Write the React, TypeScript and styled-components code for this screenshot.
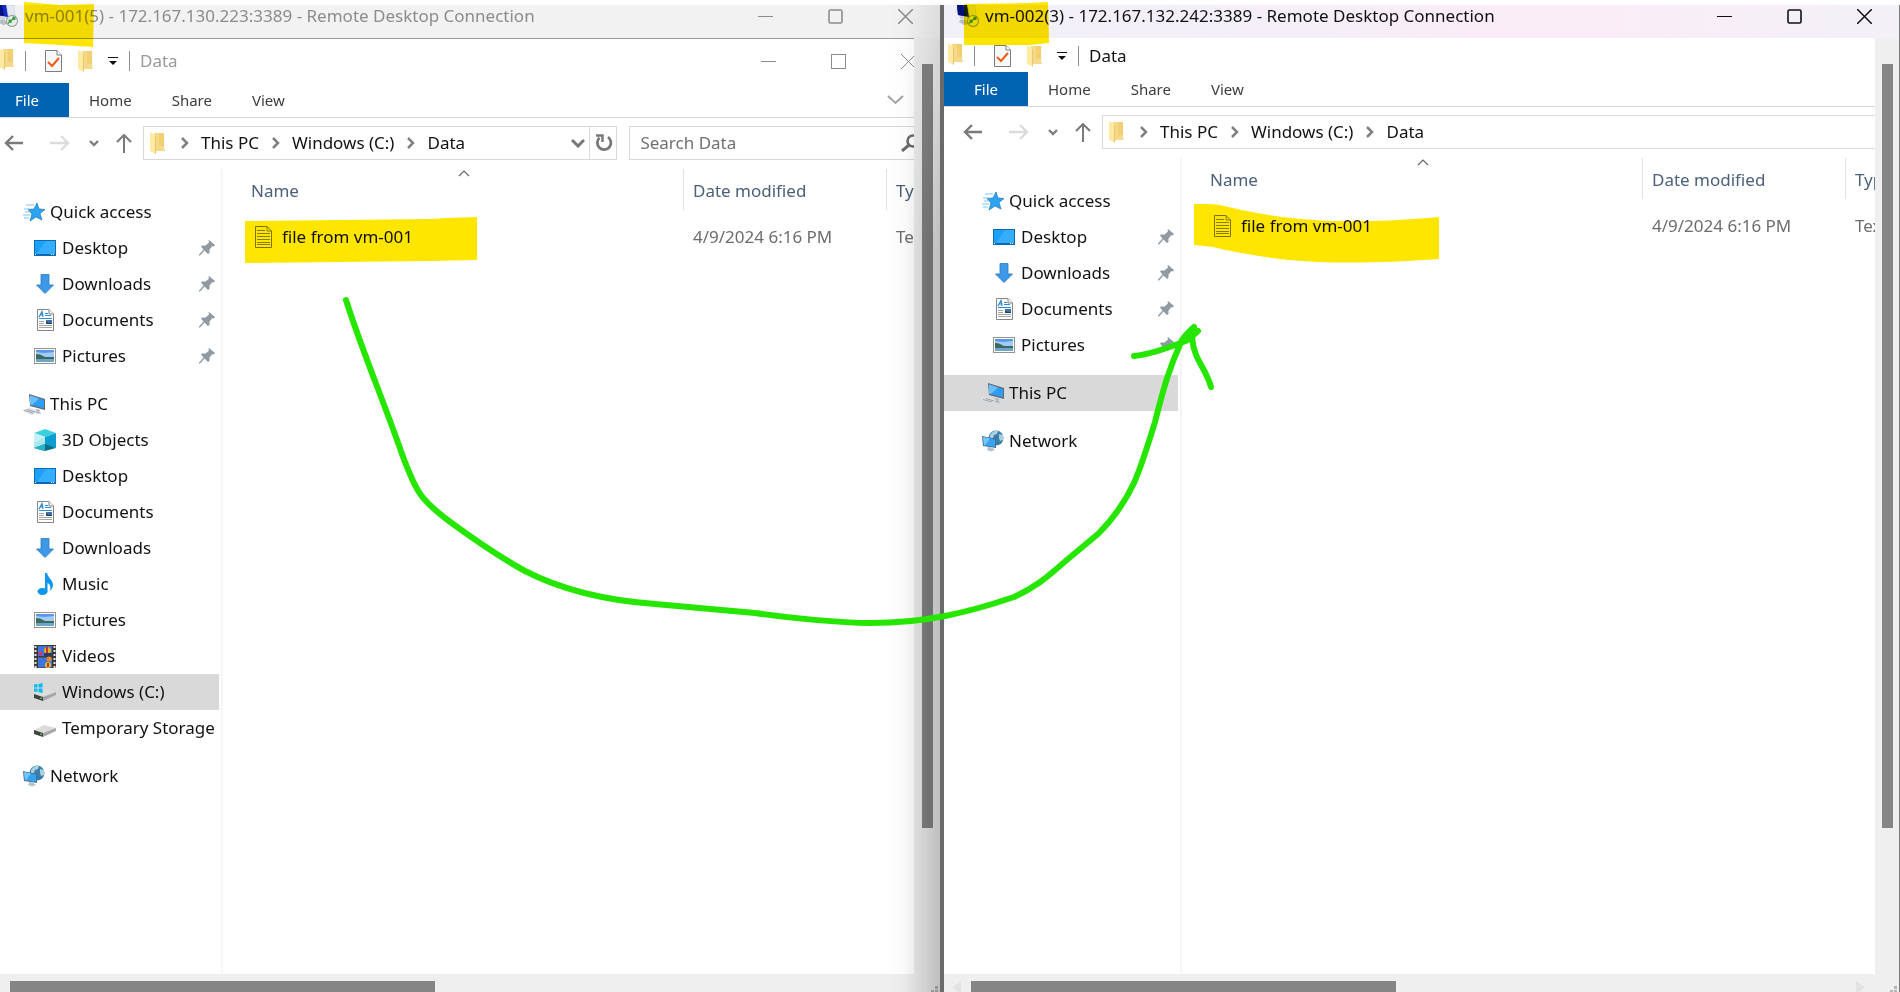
import React, { ReactNode } from 'react';
import styled, { createGlobalStyle, css } from 'styled-components';

const GlobalStyle = createGlobalStyle`
  * { box-sizing: border-box; }
  html, body { margin: 0; background: #fff; }
  body { font-family: "Noto Sans", "Open Sans", sans-serif; font-size: 17px; line-height: 24px; color: #111; overflow: hidden; }
  button { font: inherit; border: 0; background: none; padding: 0; margin: 0; color: inherit; }
  a { color: inherit; text-decoration: none; }
  svg { display: block; flex: none; }
`;

/* ---------- icons ---------- */

const RemoteIcon = () => (
  <svg width="22" height="22" viewBox="0 0 22 22">
    <path d="M1 0L18 0 20 13 3 14Z" fill="#cdd2da" />
    <path d="M0 0L10 0 12 12 1 10Z" fill="#1029c8" />
    <path d="M0 0L6 0 8 11 1 10Z" fill="#06107a" />
    <path d="M3 15L8 14 12 19 7 20 2 17Z" fill="#b9bdc4" />
    <path d="M11 0L18 1 19 12 13 12Z" fill="#e3e7ee" />
    <circle cx="16" cy="16" r="6" fill="#8f9a94" />
    <circle cx="16" cy="16" r="5" fill="#e6efe6" />
    <path d="M12.500 15.500l3-.5-1 3M19.500 14l-3 .5 1-3M14.500 15.500l-2.500 3M17.500 14l2-2" stroke="#3f9a4a" strokeWidth="1.300" fill="none" />
  </svg>
);

const FolderIcon = () => (
  <svg width="15" height="22" viewBox="0 0 15 22">
    <path d="M4 1H14V17l1 1v1H5Z" fill="#f5d98a" />
    <path d="M9 1H14V14H9Z" fill="#f3cf72" />
    <path d="M0 0L6 4V22L0 19Z" fill="#ffe9a3" />
    <path d="M5 4l1 0V22l-1-1Z" fill="#e9c668" />
  </svg>
);

const PropertiesIcon = () => (
  <svg width="17" height="22" viewBox="0 0 17 22">
    <path d="M.5.5H12L16.500 5V21.500H.5Z" fill="#f7f8fa" stroke="#7c7c7c" />
    <path d="M12 .5V5H16.500" fill="#fff" stroke="#7c7c7c" />
    <path d="M3 12l4 4 7-8" fill="none" stroke="#ea5b17" strokeWidth="2" />
  </svg>
);

const CustomizeIcon = () => (
  <svg width="10" height="9" viewBox="0 0 10 9">
    <path d="M0 0H10V1H0ZM1 4H9L5 8Z" fill="#111" />
  </svg>
);

const BackIcon = ({ color }: { color: string }) => (
  <svg width="20" height="16" viewBox="0 0 20 16">
    <path d="M9 1L2 8l7 7M2 8H19" fill="none" stroke={color} strokeWidth="2.400" />
  </svg>
);
const ForwardIcon = ({ color }: { color: string }) => (
  <svg width="20" height="16" viewBox="0 0 20 16">
    <path d="M11 1l7 7-7 7M18 8H0" fill="none" stroke={color} strokeWidth="2.400" />
  </svg>
);
const UpIcon = () => (
  <svg width="16" height="19" viewBox="0 0 16 19">
    <path d="M1 8l7-7 7 7M8 1V19" fill="none" stroke="#7a7a7a" strokeWidth="2" />
  </svg>
);
const SmallDown = () => (
  <svg width="10" height="7" viewBox="0 0 10 7">
    <path d="M1 1l4 4 4-4" fill="none" stroke="#7d7d7d" strokeWidth="2.400" />
  </svg>
);
const DownIcon = () => (
  <svg width="14" height="10" viewBox="0 0 14 10">
    <path d="M1 2l6 6 6-6" fill="none" stroke="#777" strokeWidth="3" />
  </svg>
);
const CrumbIcon = () => (
  <svg width="8" height="12" viewBox="0 0 8 12">
    <path d="M1 1l5 5-5 5" fill="none" stroke="#808080" strokeWidth="2.500" />
  </svg>
);
const RefreshIcon = () => (
  <svg width="18" height="18" viewBox="0 0 18 18">
    <path d="M13 3.200A6.800 6.800 0 1 1 4.500 3.800" fill="none" stroke="#777" strokeWidth="2.800" />
    <path d="M1 1.500H7.500V8" fill="none" stroke="#777" strokeWidth="2.400" />
  </svg>
);
const SearchIcon = () => (
  <svg width="20" height="18" viewBox="0 0 20 18">
    <circle cx="12" cy="7" r="5.500" fill="none" stroke="#6c6c6c" strokeWidth="2.600" />
    <path d="M8 11L1 17" stroke="#6c6c6c" strokeWidth="3" />
  </svg>
);
const RibbonDown = () => (
  <svg width="17" height="10" viewBox="0 0 17 10">
    <path d="M1 1l7.500 7L16 1" fill="none" stroke="#a3a3a3" strokeWidth="2" />
  </svg>
);
const SortIcon = () => (
  <svg width="12" height="7" viewBox="0 0 12 7">
    <path d="M1 6l5-5 5 5" fill="none" stroke="#666" strokeWidth="1.200" />
  </svg>
);

const MinimizeGlyph = () => (
  <svg width="15" height="15" viewBox="0 0 15 15"><path d="M0 7.500H15" stroke="currentColor" /></svg>
);
const MaximizeGlyph = ({ round }: { round?: boolean }) => (
  <svg width="15" height="15" viewBox="0 0 15 15">
    <rect x={round ? 1 : 0.5} y={round ? 1 : 0.5} width={round ? 13 : 14} height={round ? 13 : 14} rx={round ? 1.5 : 0}
      fill="none" stroke="currentColor" strokeWidth={round ? 1.6 : 1} />
  </svg>
);
const CloseGlyph = ({ bold }: { bold?: boolean }) => (
  <svg width="15" height="15" viewBox="0 0 15 15">
    <path d="M0 0L15 15M15 0L0 15" stroke="currentColor" strokeWidth={bold ? 1.5 : 1} />
  </svg>
);

const StarIcon = () => (
  <svg width="22" height="20" viewBox="0 0 22 20">
    <path d="M14 1l2 6 6 .5-5 4 2 6.500-6-3-6 4 2-7-4-4.500 6-.5Z" fill="#2ea3f2" stroke="#1478be" strokeWidth=".7" />
    <path d="M3 3H11M1 7H7M2 10H6M0 13H7M1 16H6" stroke="#7cc3f2" strokeWidth="1" />
  </svg>
);
const DesktopIcon = () => (
  <svg width="22" height="16" viewBox="0 0 22 16">
    <rect x=".5" y=".5" width="21" height="15" fill="#1ba1fb" stroke="#0b6cb4" />
    <path d="M12 1H21V14H3Z" fill="#37aefc" />
    <path d="M1 14H21V15H1Z" fill="#0a66b0" />
    <path d="M1 14h1v1H1ZM17 14h1v1h-1ZM19 14h1v1h-1Z" fill="#fff" />
  </svg>
);
const DownloadIcon = () => (
  <svg width="20" height="20" viewBox="0 0 20 20">
    <path d="M6 .5H14V11H18.500L10 19.500 1.500 11H6Z" fill="#3d98e8" stroke="#2b78c2" strokeWidth=".8" />
  </svg>
);
const DocumentIcon = () => (
  <svg width="17" height="22" viewBox="0 0 17 22">
    <path d="M.5.5H12L16.500 5V21.500H.5Z" fill="#fff" stroke="#858585" />
    <path d="M12 .5V5H16.500" fill="#f3f3f3" stroke="#858585" />
    <path d="M2 8L5 2.500 6 8M3 6H6" stroke="#1c86d8" fill="none" strokeWidth="1.200" />
    <path d="M8 4.500H11M8 6.500H14M2 9.500H15" stroke="#2b8ddb" />
    <path d="M2 12.500H7M2 14.500H7M2 16.500H15M2 18.500H15" stroke="#a5a5a5" />
    <path d="M9 11H15V15H9Z" fill="#3f6fae" /><path d="M9 13l3 1 3 0V15H9Z" fill="#23444a" />
  </svg>
);
const PictureIcon = () => (
  <svg width="22" height="16" viewBox="0 0 22 16">
    <rect x=".5" y=".5" width="21" height="15" fill="#fff" stroke="#949494" />
    <path d="M2 2H20V14H2Z" fill="#9fcbf5" />
    <path d="M2 2H20V4L10 5 2 4Z" fill="#5b97e8" />
    <path d="M2 6l4 .5 5 2.500 9 0V11H2Z" fill="#3b6a5c" />
    <path d="M2 11H20V14H2Z" fill="#6fa5c9" />
  </svg>
);
const PcIcon = () => (
  <svg width="23" height="21" viewBox="0 0 23 21">
    <path d="M7 0L23 5V16L8 12Z" fill="#5a6a78" />
    <path d="M8 1.500L22 6V14.500L8 10.500Z" fill="#2f9df4" />
    <path d="M8 1.500L17 4.400 10 11 8 10.500Z" fill="#6cc0fa" />
    <path d="M14 15l4 1-1 2 3 2-7-1Z" fill="#aab2b9" />
    <path d="M0 16l8-2 8 3-6 4Z" fill="#d9dee2" />
    <path d="M2 16.500l9 2.500M5 15.500l8 2.500" stroke="#8d979f" strokeWidth=".8" />
  </svg>
);
const ObjectsIcon = () => (
  <svg width="22" height="22" viewBox="0 0 22 22">
    <path d="M0 4L11 0 22 4 11 8Z" fill="#3bd0de" />
    <path d="M0 4L11 8V16L0 19Z" fill="#a9e8ef" /><path d="M0 4L11 8 0 14Z" fill="#c6f1f4" />
    <path d="M22 4L11 8V16L22 19Z" fill="#0c9ed2" />
    <path d="M11 15L22 19 11 22 0 19Z" fill="#0a6f86" /><path d="M11 15V22L0 19Z" fill="#29b3c6" />
  </svg>
);
const MusicIcon = () => (
  <svg width="17" height="22" viewBox="0 0 17 22">
    <ellipse cx="5.500" cy="18.500" rx="5" ry="3.500" fill="#0d97ee" />
    <path d="M8 0H10C11 5 16 7 16 12 16 15 14 17 13 18 14 14 13 11 10.500 10V18.500H8Z" fill="#0d97ee" />
  </svg>
);
const VideoIcon = () => (
  <svg width="22" height="23" viewBox="0 0 22 23">
    <path d="M0 0H22V23H0Z" fill="#3a3a3a" />
    <path d="M1.500 1V23M20.500 1V23" stroke="#e8e8e8" strokeWidth="2" strokeDasharray="2 2" />
    <path d="M4 1H18V11H4ZM4 12.500H18V22.500H4Z" fill="#3f74dd" />
    <circle cx="13.500" cy="5.500" r="3.500" fill="#e4b21c" /><path d="M12 2h2v7h-2Z" fill="#c83028" />
    <circle cx="6.500" cy="8.500" r="2" fill="#d6336c" /><path d="M10 8H18V11H10Z" fill="#2b3a66" />
    <circle cx="15" cy="14" r="2.500" fill="#e98a1c" /><circle cx="14" cy="20" r="3" fill="#e8c21c" />
    <path d="M13 18h2v4h-2Z" fill="#c83028" />
  </svg>
);
const DriveIcon = ({ windows }: { windows?: boolean }) => (
  <svg width="22" height="18" viewBox="0 0 22 18">
    <path d="M0 11L10 6 22 9 9 14Z" fill="#dcdcdc" />
    <path d="M0 11L9 14V18L0 15Z" fill="#3e4240" />
    <path d="M9 14L22 9V12L9 18Z" fill="#a7a7a7" />
    <path d="M6 14.500h2v1.500H6Z" fill="#3fbf4f" />
    {windows && <path d="M0 1.500L3.500 1V4.500H0ZM4.500 1L8.500 0V4.500H4.500ZM0 5.500H3.500V9L0 8.500ZM4.500 5.500H8.500V10L4.500 9.200Z" fill="#0bbcf2" />}
  </svg>
);
const NetworkIcon = () => (
  <svg width="22" height="22" viewBox="0 0 22 22">
    <circle cx="14" cy="8" r="7.500" fill="#3a7fa8" />
    <path d="M8 5C10 1 14 0 16 1L15 4 12 5 11 8 8 9ZM17 4l4 1 0 5-3 1-1-3Z" fill="#a9cfe2" />
    <path d="M0 6L14 9V18L1 16Z" fill="#4a6f8c" />
    <path d="M1 7L13 9.700V17L2 15.200Z" fill="#35a3f3" /><path d="M1 7L8 8.600 3 15.300 2 15.200Z" fill="#73c6fb" />
    <path d="M6 17l4 .5 3 2.500-4 1.500-4-1.500Z" fill="#b9c3cb" />
  </svg>
);
const TextFileIcon = () => (
  <svg width="17" height="22" viewBox="0 0 17 22">
    <path d="M.5.5H12L16.500 5V21.500H.5Z" fill="#fff" stroke="#7d7d7d" />
    <path d="M12 .5V5H16.500M2 4.500H10M2 7.500H15M2 10.500H15M2 13.500H15M2 16.500H15M2 18.500H15" fill="none" stroke="#8a8a8a" />
  </svg>
);
const PinIcon = () => (
  <svg width="16" height="16" viewBox="0 0 16 16">
    <path d="M10 0L16 5 15 6.500 13.500 6 10.500 9.500 10.500 13 9 14 5.500 10.500 1 15.500 0 15.500 0 14.500 4.500 9.500 2 6.500 3 5.500 6.500 5.500 10 2.500 9.500 1Z" fill="#8f9aa3" />
  </svg>
);

/* ---------- window frame ---------- */

const Screen = styled.main`
  position: relative;
  display: grid;
  grid-template-columns: minmax(0, 944fr) minmax(0, 956fr);
  height: 100vh;
  padding-top: 5px;
  overflow: hidden;
`;

const Frame = styled.section<{ $active?: boolean }>`
  position: relative;
  min-width: 0;
  min-height: 0;
  display: flex;
  flex-direction: column;
  background: #fff;
  border-right: ${p => (p.$active ? '1px solid #7d7d7d' : '4px solid #6a6a6a')};
`;

const TitleBar = styled.header<{ $active?: boolean }>`
  display: flex;
  align-items: flex-start;
  flex: none;
  height: 33px;
  overflow: hidden;
  ${p => p.$active
    ? css`background: linear-gradient(90deg, #f1f0f8 0%, #f5eff8 40%, #faedf7 55%, #faedf7 70%, #f4f0f7 95%); color: #111;`
    : css`background: #f2f2f2; color: #8c8c8c;`}
`;

const AppMark = styled.span<{ $active?: boolean }>`
  flex: none;
  width: ${p => (p.$active ? 41 : 25)}px;
  padding-left: ${p => (p.$active ? 13 : 0)}px;
  display: flex;
  justify-content: flex-start;
  overflow: hidden;
  svg { margin-left: ${p => (p.$active ? 0 : -4)}px; }
`;

const WindowTitle = styled.h1`
  margin: 0;
  font-size: 17px;
  font-weight: 400;
  line-height: 22px;
  white-space: nowrap;
`;

const Controls = styled.div<{ $clipped?: boolean; $color: string }>`
  display: flex;
  margin-left: auto;
  margin-right: ${p => (p.$clipped ? -29 : 0)}px;
  color: ${p => p.$color};
`;
const ControlButton = styled.button`
  width: 70px;
  height: 22px;
  display: flex;
  align-items: center;
  justify-content: center;
`;

const Body = styled.div`
  flex: 1;
  min-height: 0;
  display: flex;
`;
const Viewport = styled.div<{ $topLine?: boolean }>`
  flex: 1;
  min-width: 0;
  overflow: hidden;
  display: flex;
  flex-direction: column;
  ${p => p.$topLine && css`border-top: 1px solid #9b9b9b;`}
`;
const VerticalTrack = styled.div<{ $active?: boolean }>`
  flex: none;
  width: ${p => (p.$active ? 24 : 26)}px;
  padding: 26px 0 0 ${p => (p.$active ? 7 : 8)}px;
  background: #efefef;
`;
const VerticalThumb = styled.div`
  width: 11px;
  height: 84%;
  background: #858585;
`;
const HorizontalTrack = styled.div<{ $active?: boolean }>`
  flex: none;
  height: 18px;
  display: flex;
  align-items: flex-end;
  padding: 0 2px 0 ${p => (p.$active ? 9 : 10)}px;
  background: #efefef;
`;
const HorizontalThumb = styled.div<{ $active?: boolean }>`
  flex: none;
  width: 425px;
  height: 11px;
  margin-left: ${p => (p.$active ? 9 : 0)}px;
  background: #858585;
`;
const TrackArrow = styled.svg<{ $end?: boolean }>`
  ${p => p.$end && css`margin-left: auto; margin-right: 25px;`}
`;
const Grip = styled.svg<{ $pushed?: boolean }>`
  ${p => p.$pushed && css`margin-left: auto;`}
`;
const EdgeShadow = styled.div`
  position: absolute;
  top: 0;
  right: 0;
  bottom: 0;
  width: 55px;
  pointer-events: none;
  background: linear-gradient(90deg, rgba(0,0,0,0) 0%, rgba(0,0,0,.02) 35%, rgba(0,0,0,.07) 53%, rgba(0,0,0,.2) 100%);
  mask-image: linear-gradient(180deg, rgba(0,0,0,.4), #000 25%);
`;

/* ---------- explorer chrome ---------- */

const QuickBar = styled.div<{ $active?: boolean }>`
  display: flex;
  align-items: center;
  flex: none;
  height: ${p => (p.$active ? 34 : 44)}px;
  padding-top: ${p => (p.$active ? 2 : 0)}px;
  padding-left: ${p => (p.$active ? 4 : 0)}px;
  overflow: hidden;
`;
const QuickFolder = styled.span<{ $cut?: boolean }>`
  display: block;
  flex: none;
  width: ${p => (p.$cut ? 14 : 15)}px;
  overflow: hidden;
  margin-bottom: 4px;
  svg { margin-left: ${p => (p.$cut ? -1 : 0)}px; }
`;
const Divider = styled.span`
  width: 1px;
  height: 20px;
  margin: 0 0 0 11px;
  background: #8d8d8d;
`;
const QuickButton = styled.button<{ $gap: number }>`
  margin-left: ${p => p.$gap}px;
`;
const FolderTitle = styled.h2<{ $active?: boolean }>`
  margin: 0 0 0 10px;
  font-size: 17px;
  font-weight: 400;
  line-height: 24px;
  color: ${p => (p.$active ? '#111' : '#999')};
`;

const Ribbon = styled.nav`
  display: flex;
  flex: none;
  height: 35px;
  border-bottom: 1px solid #d9d9d9;
`;
const FileTab = styled.button<{ $active?: boolean }>`
  width: ${p => (p.$active ? 84 : 69)}px;
  padding-left: ${p => (p.$active ? 30 : 15)}px;
  text-align: left;
  font-size: 15px;
  color: #fff;
  background: #0063b1;
`;
const Tab = styled.button`
  padding: 0 20px;
  font-size: 15px;
  color: #3c3c3c;
`;
const RibbonToggle = styled.button`
  margin-left: auto;
  padding-right: 10px;
`;

const NavRow = styled.div<{ $active?: boolean }>`
  display: flex;
  align-items: center;
  flex: none;
  padding: 8px 0 9px ${p => (p.$active ? 19 : 4)}px;
`;
const NavButton = styled.button<{ $gap?: number }>`
  flex: none;
  margin-left: ${p => p.$gap ?? 0}px;
`;
const AddressBar = styled.div<{ $open?: boolean }>`
  display: flex;
  align-items: center;
  height: 34px;
  margin-left: 11px;
  padding-left: 6px;
  border: 1px solid #d9d9d9;
  ${p => p.$open ? css`flex: 1; border-right: 0;` : css`flex: 472 1 0;`}
`;
const Crumb = styled.a`
  margin: 0 13px 0 12px;
  white-space: nowrap;
`;
const CrumbLead = styled.span`
  margin-left: 16px;
`;
const HistoryButton = styled.button`
  margin: 0 4px 0 auto;
`;
const RefreshButton = styled.button`
  align-self: stretch;
  width: 27px;
  padding-left: 5px;
  border-left: 1px solid #d9d9d9;
`;
const SearchBox = styled.label`
  flex: 287 1 0;
  display: flex;
  align-items: center;
  height: 34px;
  margin-left: 12px;
  border: 1px solid #d9d9d9;
  border-right: 0;
  overflow: hidden;
  svg { margin-right: -7px; }
`;
const SearchInput = styled.input`
  flex: 1;
  min-width: 0;
  padding: 0 0 0 10px;
  border: 0;
  outline: 0;
  background: none;
  font: inherit;
  &::placeholder { color: #707070; opacity: 1; }
`;

/* ---------- panes ---------- */

const Panes = styled.div`
  display: flex;
  flex: 1;
  min-height: 0;
`;
const Sidebar = styled.aside<{ $active?: boolean }>`
  flex: none;
  width: ${p => (p.$active ? 238 : 223)}px;
  padding: 25px 2px 0 0;
  border-right: 2px solid #f5f5f5;
`;
const TreeGroup = styled.ul`
  list-style: none;
  margin: 0 0 12px;
  padding: 0;
`;
const TreeLink = styled.a<{ $inset: number; $child?: boolean; $selected?: boolean }>`
  display: flex;
  align-items: center;
  height: 36px;
  padding-left: ${p => p.$inset + (p.$child ? 34 : 22)}px;
  padding-right: 4px;
  overflow: hidden;
  white-space: nowrap;
  background: ${p => (p.$selected ? '#d9d9d9' : 'transparent')};
`;
const TreeIcon = styled.span<{ $child?: boolean }>`
  flex: none;
  display: flex;
  justify-content: center;
  width: ${p => (p.$child ? 22 : 23)}px;
  margin-right: ${p => (p.$child ? 6 : 5)}px;
`;
const TreeLabel = styled.span`
  flex: 1;
`;

const FileList = styled.div`
  flex: 1;
  min-width: 0;
  overflow: hidden;
`;
const FileTable = styled.table`
  width: 100%;
  border-collapse: separate;
  border-spacing: 0;
  table-layout: fixed;
`;
const HeadCell = styled.th<{ $lead?: boolean; $last?: boolean }>`
  position: relative;
  height: 41px;
  padding: 3px 0 0 ${p => (p.$lead ? 28 : 9)}px;
  text-align: left;
  font-weight: 400;
  color: #4c607a;
  white-space: nowrap;
  border-right: ${p => (p.$last ? 0 : '1px solid #e2e2e2')};
`;
const SortMark = styled.span`
  position: absolute;
  top: 1px;
  left: 51%;
`;
const Cell = styled.td<{ $lead?: boolean }>`
  height: 53px;
  padding: 0 0 0 ${p => (p.$lead ? 32 : 9)}px;
  color: ${p => (p.$lead ? '#111' : '#6d6d6d')};
  white-space: nowrap;
`;
const FileName = styled.a`
  display: flex;
  align-items: center;
  gap: 10px;
`;

const Annotations = styled.svg`
  position: absolute;
  inset: 0;
  width: 100%;
  height: 100%;
  pointer-events: none;
  mix-blend-mode: multiply;
`;
const Ink = styled(Annotations)`
  mix-blend-mode: normal;
`;

/* ---------- data ---------- */

type Item = { label: string; icon: ReactNode; child?: boolean; pinned?: boolean; selected?: boolean };

const quickAccess: Item[] = [
  { label: 'Quick access', icon: <StarIcon /> },
  { label: 'Desktop', icon: <DesktopIcon />, child: true, pinned: true },
  { label: 'Downloads', icon: <DownloadIcon />, child: true, pinned: true },
  { label: 'Documents', icon: <DocumentIcon />, child: true, pinned: true },
  { label: 'Pictures', icon: <PictureIcon />, child: true, pinned: true },
];
const network: Item[] = [{ label: 'Network', icon: <NetworkIcon /> }];

const sourceTree: Item[][] = [
  quickAccess,
  [
    { label: 'This PC', icon: <PcIcon /> },
    { label: '3D Objects', icon: <ObjectsIcon />, child: true },
    { label: 'Desktop', icon: <DesktopIcon />, child: true },
    { label: 'Documents', icon: <DocumentIcon />, child: true },
    { label: 'Downloads', icon: <DownloadIcon />, child: true },
    { label: 'Music', icon: <MusicIcon />, child: true },
    { label: 'Pictures', icon: <PictureIcon />, child: true },
    { label: 'Videos', icon: <VideoIcon />, child: true },
    { label: 'Windows (C:)', icon: <DriveIcon windows />, child: true, selected: true },
    { label: 'Temporary Storage (D:)', icon: <DriveIcon />, child: true },
  ],
  network,
];
const targetTree: Item[][] = [quickAccess, [{ label: 'This PC', icon: <PcIcon />, selected: true }], network];

function RemoteWindow({ title, tree, active }: { title: string; tree: Item[][]; active?: boolean }) {
  return (
    <Frame $active={active}>
      <TitleBar $active={active}>
        <AppMark $active={active}><RemoteIcon /></AppMark>
        <WindowTitle>{title}</WindowTitle>
        <Controls $color={active ? '#111' : '#8c8c8c'}>
          <ControlButton aria-label="Minimize"><MinimizeGlyph /></ControlButton>
          <ControlButton aria-label="Maximize"><MaximizeGlyph round /></ControlButton>
          <ControlButton aria-label="Close"><CloseGlyph bold /></ControlButton>
        </Controls>
      </TitleBar>
      <Body>
        <Viewport $topLine={!active}>
          <QuickBar $active={active}>
            <QuickFolder $cut={!active}><FolderIcon /></QuickFolder>
            <Divider />
            <QuickButton $gap={19} aria-label="Properties"><PropertiesIcon /></QuickButton>
            <QuickButton $gap={16} aria-label="New folder"><FolderIcon /></QuickButton>
            <QuickButton $gap={15} aria-label="Customize toolbar"><CustomizeIcon /></QuickButton>
            <Divider />
            <FolderTitle $active={active}>Data</FolderTitle>
            {!active && (
              <Controls $clipped $color="#8c8c8c">
                <ControlButton aria-label="Minimize folder"><MinimizeGlyph /></ControlButton>
                <ControlButton aria-label="Maximize folder"><MaximizeGlyph /></ControlButton>
                <ControlButton aria-label="Close folder"><CloseGlyph /></ControlButton>
              </Controls>
            )}
          </QuickBar>
          <Ribbon>
            <FileTab $active={active}>File</FileTab>
            <Tab>Home</Tab>
            <Tab>Share</Tab>
            <Tab>View</Tab>
            {!active && <RibbonToggle aria-label="Expand ribbon"><RibbonDown /></RibbonToggle>}
          </Ribbon>
          <NavRow $active={active}>
            <NavButton aria-label="Back"><BackIcon color="#7a7a7a" /></NavButton>
            <NavButton aria-label="Forward" $gap={26}><ForwardIcon color="#dcdcdc" /></NavButton>
            <NavButton aria-label="Recent locations" $gap={19}><SmallDown /></NavButton>
            <NavButton aria-label="Up" $gap={17}><UpIcon /></NavButton>
            <AddressBar $open={active}>
              <FolderIcon />
              <CrumbLead><CrumbIcon /></CrumbLead>
              <Crumb href="#pc">This PC</Crumb>
              <CrumbIcon />
              <Crumb href="#c">Windows (C:)</Crumb>
              <CrumbIcon />
              <Crumb href="#data">Data</Crumb>
              {!active && (
                <>
                  <HistoryButton aria-label="Previous locations"><DownIcon /></HistoryButton>
                  <RefreshButton aria-label="Refresh"><RefreshIcon /></RefreshButton>
                </>
              )}
            </AddressBar>
            {!active && (
              <SearchBox>
                <SearchInput type="text" placeholder="Search Data" aria-label="Search Data" />
                <SearchIcon />
              </SearchBox>
            )}
          </NavRow>
          <Panes>
            <Sidebar $active={active}>
              {tree.map((group, g) => (
                <TreeGroup key={g}>
                  {group.map(item => (
                    <li key={item.label}>
                      <TreeLink href="#folder" $inset={active ? 15 : 0} $child={item.child} $selected={item.selected}>
                        <TreeIcon $child={item.child}>{item.icon}</TreeIcon>
                        <TreeLabel>{item.label}</TreeLabel>
                        {item.pinned && <PinIcon />}
                      </TreeLink>
                    </li>
                  ))}
                </TreeGroup>
              ))}
            </Sidebar>
            <FileList>
              <FileTable>
                <colgroup>
                  <col style={{ width: 461 }} />
                  <col style={{ width: 203 }} />
                  <col />
                </colgroup>
                <thead>
                  <tr>
                    <HeadCell $lead>Name<SortMark><SortIcon /></SortMark></HeadCell>
                    <HeadCell>Date modified</HeadCell>
                    <HeadCell $last>Type</HeadCell>
                  </tr>
                </thead>
                <tbody>
                  <tr>
                    <Cell $lead><FileName href="#file"><TextFileIcon />file from vm-001</FileName></Cell>
                    <Cell>4/9/2024 6:16 PM</Cell>
                    <Cell>Text Document</Cell>
                  </tr>
                </tbody>
              </FileTable>
            </FileList>
          </Panes>
        </Viewport>
        <VerticalTrack $active={active}><VerticalThumb /></VerticalTrack>
      </Body>
      <HorizontalTrack $active={active}>
        {active && <TrackArrow width="9" height="11" viewBox="0 0 9 11"><path d="M8 0V11H5L0 6Z" fill="#e2e2e2" /></TrackArrow>}
        <HorizontalThumb $active={active} />
        {active && <TrackArrow $end width="9" height="11" viewBox="0 0 9 11"><path d="M0 0V11H3L9 6Z" fill="#e2e2e2" /></TrackArrow>}
        <Grip $pushed={!active} width="7" height="6" viewBox="0 0 7 6"><path d="M4 0H7V3H4ZM4 4H7V6H4ZM0 4H3V6H0Z" fill="#b5b5b5" /></Grip>
      </HorizontalTrack>
      {!active && <EdgeShadow />}
    </Frame>
  );
}

export default function App() {
  return (
    <>
      <GlobalStyle />
      <Screen>
        <RemoteWindow title="vm-001(5) - 172.167.130.223:3389 - Remote Desktop Connection" tree={sourceTree} />
        <RemoteWindow title="vm-002(3) - 172.167.132.242:3389 - Remote Desktop Connection" tree={targetTree} active />
        <Annotations viewBox="0 0 1900 992" preserveAspectRatio="none" aria-hidden="true">
          <g fill="#ffe600">
            <path d="M24 2L60 5 94 4 93 47 60 45 24 43Z" />
            <path d="M964 4L1030 3 1048 2 1049 43 1030 45 964 45Z" />
            <path d="M245 221L430 219 447 218 477 217 477 260 430 261 340 262 245 263Z" />
            <path d="M1194 204C1210 204 1216 204 1224 206 1290 222 1350 225 1439 217V259C1340 266 1280 263 1213 247L1194 245Z" />
          </g>
        </Annotations>
        <Ink viewBox="0 0 1900 992" preserveAspectRatio="none" aria-hidden="true">
          <g fill="none" stroke="#26e600" strokeWidth="6" strokeLinecap="round" strokeLinejoin="round">
            <path d="M346 300C360 345 385 405 402 454C416 492 420 500 453 524C475 540 505 560 525 571C560 589 600 600 655 604L755 613C790 618 840 623 870 623C905 623 925 620 945 616C980 609 1005 600 1014 597C1040 585 1050 574 1068 559L1098 534C1116 516 1126 500 1134 483C1142 465 1148 445 1155 422C1164 386 1170 366 1182 340Q1186 334 1194 327" />
            <path d="M1134 356C1155 354 1180 343 1188 340L1198 331M1192 337C1194 361 1205 366 1211 387" />
          </g>
        </Ink>
      </Screen>
    </>
  );
}
